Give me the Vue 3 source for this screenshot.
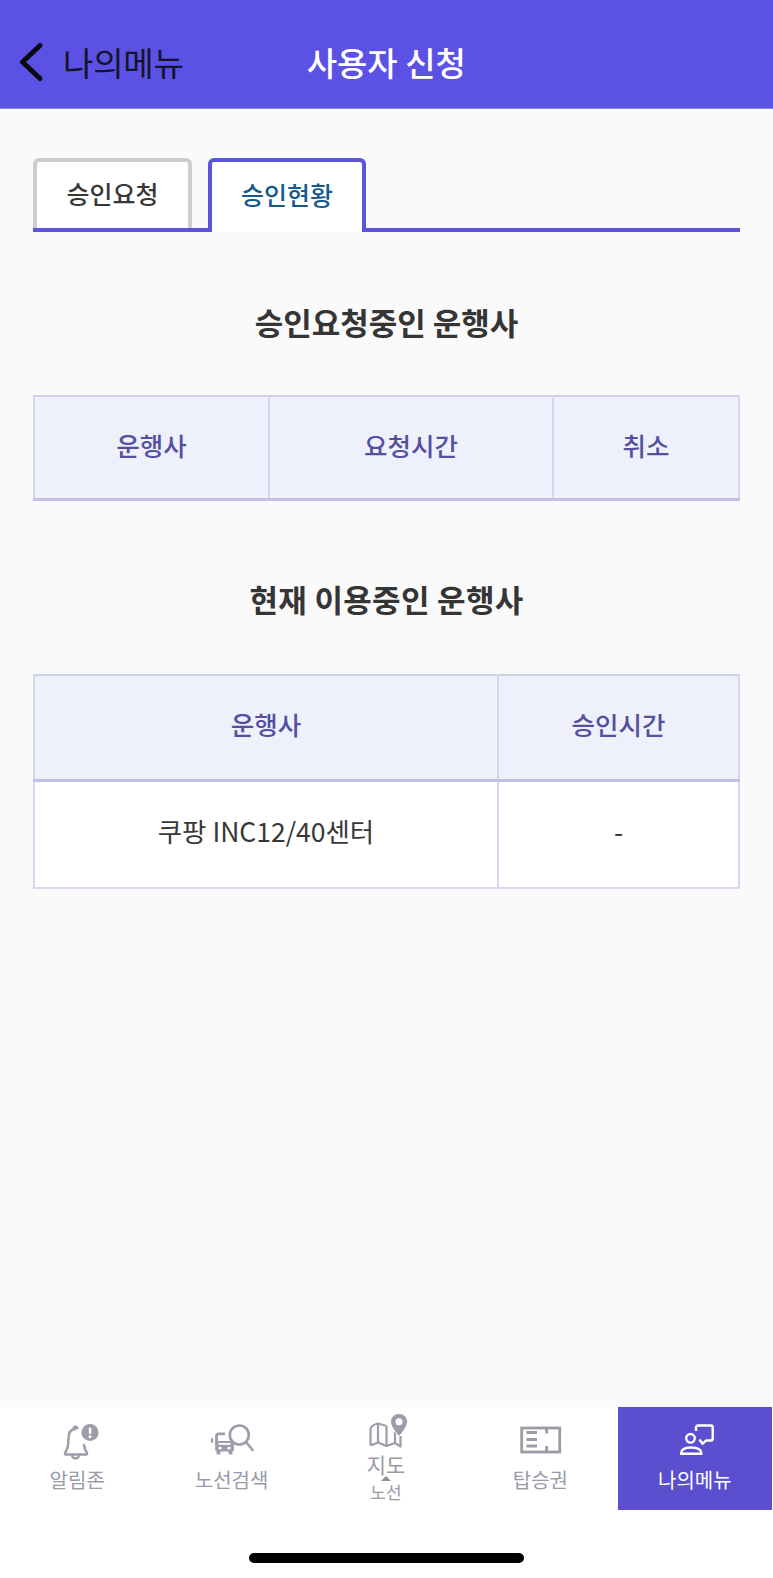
<script setup>
const pendingHead = [
  { label: '운행사', cls: 'c1' },
  { label: '요청시간', cls: 'c2' },
  { label: '취소', cls: 'c3' },
]
const currentHead = [
  { label: '운행사', cls: 'c4' },
  { label: '승인시간', cls: 'c5' },
]
</script>

<template>
  <div class="page">
    <header class="top">
      <div class="back">
        <svg class="chev" viewBox="0 0 24 38" width="24" height="38">
          <path d="M21 2.500 L3.500 19 L21 35.500" fill="none" stroke="#0a0a14" stroke-width="5" stroke-linecap="round" stroke-linejoin="round" />
        </svg>
        <span class="back-text">나의메뉴</span>
      </div>
      <h1 class="top-title">사용자 신청</h1>
    </header>

    <main class="main">
      <div class="tabs">
        <div class="tab first-tab">승인요청</div>
        <div class="tab active">승인현황</div>
      </div>

      <h2 class="sec first">승인요청중인 운행사</h2>
      <table class="tbl">
        <thead>
          <tr><th v-for="h in pendingHead" :key="h.label" :class="h.cls">{{ h.label }}</th></tr>
        </thead>
      </table>

      <h2 class="sec second">현재 이용중인 운행사</h2>
      <table class="tbl two">
        <thead>
          <tr><th v-for="h in currentHead" :key="h.label" :class="h.cls">{{ h.label }}</th></tr>
        </thead>
        <tbody>
          <tr><td>쿠팡 INC12/40센터</td><td class="dash">-</td></tr>
        </tbody>
      </table>
    </main>

    <nav class="nav">
      <div class="items">
        <div class="item">
          <svg class="ic bell" width="40" height="36" viewBox="0 0 40 36">
            <path d="M14.500 5a2 2.300 0 0 1 4 0" fill="none" stroke="#9c9cab" stroke-width="2.400" />
            <path d="M16.500 5C11 5 9.500 10 9.500 15C9.500 22 8 26 6 29C5.500 30 6 30.500 7 30.500H27C28 30.500 28.500 30 28 29C27 27.500 25.500 25 25 21" fill="none" stroke="#9c9cab" stroke-width="2.400" stroke-linejoin="round" stroke-linecap="round" />
            <path d="M13 31a3.500 3.500 0 0 0 7 0" fill="none" stroke="#9c9cab" stroke-width="2.400" />
            <circle cx="31" cy="8.500" r="8.500" fill="#9c9cab" />
            <rect x="29.800" y="3.500" width="2.500" height="6.500" rx="1" fill="#fff" />
            <circle cx="31" cy="12.700" r="1.500" fill="#fff" />
          </svg>
          <span class="lab">알림존</span>
        </div>

        <div class="item">
          <svg class="ic" width="44" height="36" viewBox="0 0 44 36">
            <circle cx="29.300" cy="11" r="9.500" fill="none" stroke="#9c9cab" stroke-width="2.600" />
            <path d="M36.500 18.500l6 7.500" stroke="#9c9cab" stroke-width="2.600" stroke-linecap="round" />
            <path d="M15 9.800H8.500a2 2 0 0 0-2 2V20" fill="none" stroke="#9c9cab" stroke-width="2.800" />
            <rect x="5.200" y="17" width="18.800" height="10.500" rx="2" fill="#9c9cab" />
            <rect x="8.500" y="19" width="12" height="1.800" fill="#fff" />
            <rect x="8.500" y="23" width="3" height="2.300" fill="#fff" />
            <rect x="17.500" y="23" width="3" height="2.300" fill="#fff" />
            <rect x="6.500" y="27" width="4" height="3.500" rx="1" fill="#9c9cab" />
            <rect x="18.500" y="27" width="4" height="3.500" rx="1" fill="#9c9cab" />
            <rect x="1" y="14" width="2.200" height="5" rx="1" fill="#9c9cab" />
          </svg>
          <span class="lab">노선검색</span>
        </div>

        <div class="item map">
          <svg class="ic" width="44" height="38" viewBox="0 0 44 38">
            <path d="M6.500 33.500V17.500C6.500 14 9.500 12.500 14 11.500L22.500 14M14 11.500V30.500M22.500 14V34M6.500 33.500L14 30.500L22.500 34L31 31L36.500 34.500V24M31 20V31" fill="none" stroke="#9c9cab" stroke-width="2.200" stroke-linejoin="round" />
            <path d="M35 1.500C30.300 1.500 26.500 5 26.500 9.800C26.500 15.500 35 24.500 35 24.500S43.500 15.500 43.500 9.800C43.500 5 39.700 1.500 35 1.500Z" fill="#9c9cab" stroke="#fff" stroke-width="1" />
            <circle cx="35" cy="9.800" r="3.500" fill="#fff" />
          </svg>
          <span class="map-a">지도</span>
          <i class="tri"></i>
          <span class="map-b">노선</span>
        </div>

        <div class="item">
          <svg class="ic" width="44" height="36" viewBox="0 0 44 36">
            <rect x="3.700" y="4" width="38" height="24" fill="none" stroke="#9c9ca6" stroke-width="2.800" />
            <path d="M28.700 4V9.500M28.700 28V22" stroke="#9c9ca6" stroke-width="2.800" />
            <path d="M8.500 8.500H19M8.500 15.500H19M8.500 22H19" stroke="#9c9ca6" stroke-width="2.800" />
          </svg>
          <span class="lab">탑승권</span>
        </div>

        <div class="item on">
          <svg class="ic" width="40" height="36" viewBox="0 0 40 36">
            <circle cx="15.500" cy="14.300" r="4.300" fill="none" stroke="#fff" stroke-width="2.400" />
            <path d="M6 29.800C6 25.500 10 23.500 16 23.500S26.500 25.500 26.500 29.800Z" fill="none" stroke="#fff" stroke-width="2.400" stroke-linejoin="round" />
            <path d="M21 7V3.500C21 2.300 21.800 1.500 23 1.500H36C37 1.500 37.700 2.300 37.700 3.500V14.500C37.700 15.700 37 16.500 36 16.500H31L27.500 19.800L24.500 15.500" fill="none" stroke="#fff" stroke-width="2.400" stroke-linejoin="round" />
          </svg>
          <span class="lab">나의메뉴</span>
        </div>
      </div>
      <div class="home-area"><span class="home"></span></div>
    </nav>
  </div>
</template>

<style scoped>
.page {
  width: 773px;
  height: 1578px;
  display: flex;
  flex-direction: column;
  background: #fafafa;
  font-family: "Noto Sans CJK KR", "Noto Sans", sans-serif;
  overflow: hidden;
}
.top {
  height: 92px;
  padding-top: 16px;
  flex: none;
  background: #5b51e4;
  border-bottom: 1px solid #8f88ea;
  display: flex;
  align-items: center;
  box-sizing: content-box;
}
.back {
  display: flex;
  align-items: center;
  margin-left: 19px;
  gap: 20px;
}
.chev { display: block; }
.back-text {
  font-size: 33px;
  line-height: 44px;
  letter-spacing: -.2px;
  color: #14142a;
}
.top-title {
  margin: 0 0 0 123px;
  font-size: 33px;
  line-height: 44px;
  font-weight: 500;
  color: #fff;
}
.main {
  flex: 1;
  padding: 49px 33px 0;
}
.tabs {
  display: flex;
  gap: 16px;
  height: 74px;
  box-sizing: border-box;
  border-bottom: 4px solid #5d54dd;
}
.tab {
  width: 158px;
  box-sizing: border-box;
  background: #fff;
  border: 4px solid #cdcdcd;
  border-bottom: none;
  border-radius: 6px 6px 0 0;
  display: flex;
  align-items: center;
  justify-content: center;
  font-size: 25px;
  font-weight: 500;
  color: #383838;
  padding-bottom: 4px;
}
.first-tab { width: 159px; }
.tab.active {
  border-color: #5d54dd;
  color: #14598f;
  height: 74px;
  position: relative;
  z-index: 1;
  padding-bottom: 7px;
}
.sec {
  margin: 0;
  text-align: center;
  font-size: 31px;
  line-height: 40px;
  font-weight: 700;
  color: #353535;
}
.sec.first { margin: 70px 0 53px; }
.sec.second { margin: 78px 0 55px; letter-spacing: .3px; }
.tbl {
  width: 705px;
  border-collapse: collapse;
  table-layout: fixed;
}
th, td {
  box-sizing: border-box;
  border: 2.500px solid #d7d7ee;
  text-align: center;
  padding: 0;
}
th {
  height: 103px;
  background: #eef0fb;
  border-top-color: #cfcfe8;
  border-bottom: 3px solid #c2bfe8;
  font-size: 25.500px;
  font-weight: 500;
  color: #544f9f;
  padding-bottom: 5px;
}
.two th { height: 106px; padding-bottom: 7px; }
td {
  height: 107px;
  background: #fff;
  font-size: 26.500px;
  font-weight: 400;
  color: #383838;
  padding-bottom: 7px;
}
.c1 { width: 235px; }
.c2 { width: 284px; }
.c3 { width: 186px; }
.c4 { width: 464px; }
.c5 { width: 241px; }
.nav {
  flex: none;
  height: 171px;
  background: #fff;
  display: flex;
  flex-direction: column;
}
.items {
  height: 103px;
  display: grid;
  grid-template-columns: repeat(5, 1fr);
  padding-right: 1px;
}
.item {
  display: flex;
  flex-direction: column;
  align-items: center;
  justify-content: flex-start;
  padding-top: 17px;
  color: #9a9aa8;
}
.ic { display: block; flex: none; }
.bell { margin-left: 3px; }
.lab {
  font-size: 20px;
  line-height: 28px;
  margin-top: 6px;
}
.item.map { padding-top: 5px; }
.map-a { font-size: 21px; line-height: 24px; margin-top: 2px; }
.tri {
  width: 0;
  height: 0;
  border-left: 5px solid transparent;
  border-right: 5px solid transparent;
  border-bottom: 5px solid #8f8f9d;
}
.map-b { font-size: 17px; line-height: 22px; }
.item.on { background: #5b4fcf; color: #fff; }
.home-area {
  flex: 1;
  display: flex;
  justify-content: center;
  padding-top: 43px;
}
.home {
  width: 275px;
  height: 10px;
  border-radius: 5px;
  background: #000;
}
</style>
